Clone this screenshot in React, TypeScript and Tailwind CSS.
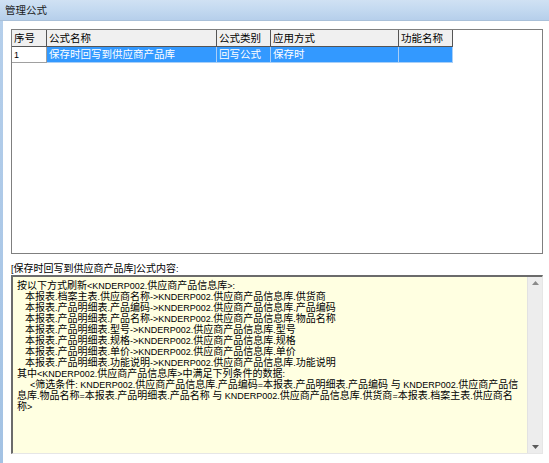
import React from "react";

const FONT = "font-['Liberation_Sans','Noto_Sans_CJK_SC',sans-serif]";

function Mixed({ text }: { text: string }) {
  const parts = text.split(/([\u3000-\u9fff\uff00-\uffef]+)/).filter((p) => p.length > 0);
  return (
    <>
      {parts.map((p, i) =>
        /[\u3000-\u9fff\uff00-\uffef]/.test(p) ? (
          <span key={i} className="text-[10px]">
            {p}
          </span>
        ) : (
          <span key={i} className="text-[9px]">
            {p}
          </span>
        )
      )}
    </>
  );
}

const lines: { t: string; indent: number }[] = [
  { t: "按以下方式刷新<KNDERP002.供应商产品信息库>:", indent: 0 },
  { t: "本报表.档案主表.供应商名称->KNDERP002.供应商产品信息库.供货商", indent: 1 },
  { t: "本报表.产品明细表.产品编码->KNDERP002.供应商产品信息库.产品编码", indent: 1 },
  { t: "本报表.产品明细表.产品名称->KNDERP002.供应商产品信息库.物品名称", indent: 1 },
  { t: "本报表.产品明细表.型号->KNDERP002.供应商产品信息库.型号", indent: 1 },
  { t: "本报表.产品明细表.规格->KNDERP002.供应商产品信息库.规格", indent: 1 },
  { t: "本报表.产品明细表.单价->KNDERP002.供应商产品信息库.单价", indent: 1 },
  { t: "本报表.产品明细表.功能说明->KNDERP002.供应商产品信息库.功能说明", indent: 1 },
  { t: "其中<KNDERP002.供应商产品信息库>中满足下列条件的数据:", indent: 0 },
  { t: "<筛选条件: KNDERP002.供应商产品信息库.产品编码=本报表.产品明细表.产品编码 与 KNDERP002.供应商产品信", indent: 2 },
  { t: "息库.物品名称=本报表.产品明细表.产品名称 与 KNDERP002.供应商产品信息库.供货商=本报表.档案主表.供应商名", indent: 0 },
  { t: "称>", indent: 0 },
];

export default function App() {
  return (
    <div className={`w-[549px] h-[463px] flex flex-col overflow-hidden bg-white text-black ${FONT}`}>
      {/* title bar */}
      <div className="h-[21px] shrink-0 flex items-center pl-[5px] bg-gradient-to-b from-[#d0e1f3] via-[#c3d9f0] to-[#b6cfeb] border-b border-[#a9c0d9]">
        <span className="text-[10.5px] leading-[11px] text-[#1a1a1a]">管理公式</span>
      </div>

      <div className="flex-1 flex">
        <div className="w-[3px] bg-gradient-to-b from-[#b5cfeb] to-[#a3c2e4]" />
        <div className="flex-1 flex flex-col pl-[8px] pr-[6px] bg-white">
          {/* grid */}
          <div className="mt-[8px] h-[225px] border border-[#7f7f7f] bg-white flex flex-col">
            <div className="flex h-[17px] text-[10.5px] leading-[16px]">
              <div className="w-[35px] bg-[#f0f0f0] border-r border-b border-[#555] pl-[2px]">序号</div>
              <div className="w-[170px] bg-[#f0f0f0] border-r border-b border-[#555] pl-[2px]">公式名称</div>
              <div className="w-[54px] bg-[#f0f0f0] border-r border-b border-[#555] pl-[2px]">公式类别</div>
              <div className="w-[128px] bg-[#f0f0f0] border-r border-b border-[#555] pl-[2px]">应用方式</div>
              <div className="w-[54px] bg-[#f0f0f0] border-r border-b border-[#555] pl-[2px]">功能名称</div>
            </div>
            <div className="flex h-[16px] text-[10.5px] leading-[15px]">
              <div className="w-[35px] bg-white border-r border-b border-[#a0a0a0] pl-[2px]">
                <span className="text-[9px]">1</span>
              </div>
              <div className="w-[170px] bg-[#3399ff] text-white border-r border-b border-[#a9cff7] pl-[2px]">保存时回写到供应商产品库</div>
              <div className="w-[54px] bg-[#3399ff] text-white border-r border-b border-[#a9cff7] pl-[2px]">回写公式</div>
              <div className="w-[128px] bg-[#3399ff] text-white border-r border-b border-[#a9cff7] pl-[2px]">保存时</div>
              <div className="w-[54px] bg-[#3399ff] text-white border-r border-b border-[#a9cff7] pl-[2px]"></div>
            </div>
          </div>

          {/* label */}
          <div className="mt-[7px] mb-[3px] h-[11px] leading-[11px] whitespace-pre">
            <Mixed text="[保存时回写到供应商产品库]公式内容:" />
          </div>

          {/* memo */}
          <div className="h-[179px] flex border-t-2 border-l-2 border-t-[#6b6b6b] border-l-[#6b6b6b] border-b border-r border-b-[#e6e6e6] border-r-[#e6e6e6]">
            <div className="flex-1 bg-[#ffffe1] pt-[1px] pl-[4px] overflow-hidden">
              {lines.map((l, i) => (
                <div
                  key={i}
                  className={`h-[11px] leading-[11px] whitespace-pre ${
                    l.indent === 1 ? "pl-[8px]" : l.indent === 2 ? "pl-[13px]" : ""
                  }`}
                >
                  <Mixed text={l.t} />
                </div>
              ))}
            </div>
            <div className="w-[15px] bg-[#ededed] border-l border-[#e2e2e2] flex flex-col items-center justify-between py-[4px]">
              <svg width="7" height="4" viewBox="0 0 7 4">
                <path d="M0 4 L3.5 0 L7 4 Z" fill="#8a8a8a" />
              </svg>
              <svg width="7" height="4" viewBox="0 0 7 4">
                <path d="M0 0 L3.5 4 L7 0 Z" fill="#5a5a5a" />
              </svg>
            </div>
          </div>
        </div>
      </div>
    </div>
  );
}
